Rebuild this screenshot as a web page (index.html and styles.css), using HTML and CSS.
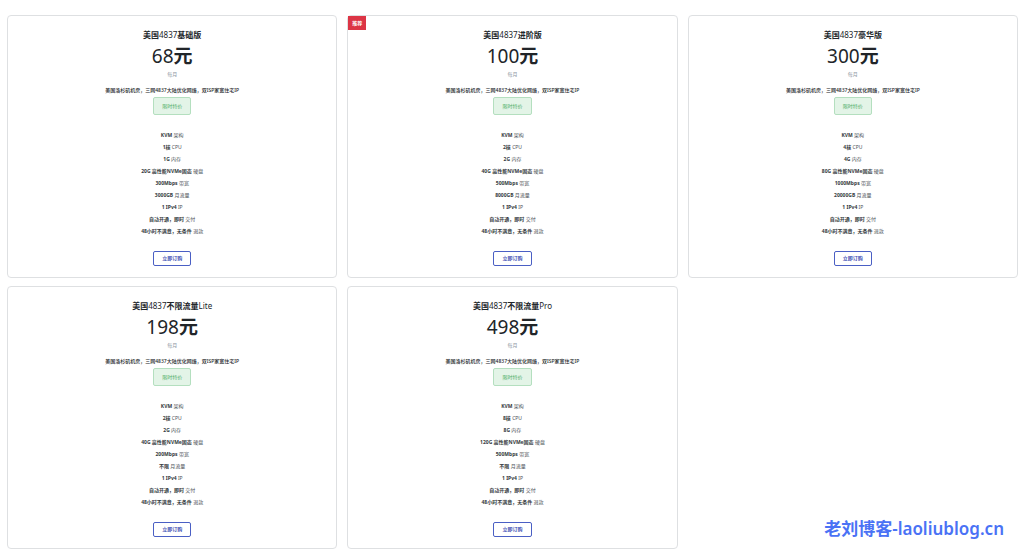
FILE: index.html
```
<!DOCTYPE html>
<html lang="zh-CN">
<head>
    <meta charset="UTF-8">
    <meta name="viewport" content="width=device-width, initial-scale=1.0">
    <title>美国4837</title>
    <link rel="stylesheet" href="styles.css">
</head>
<body>
    <main class="plans">
        <section class="plan">
            <h2 class="plan-name"><b>美国</b>4837<b>基础版</b></h2>
            <p class="price">68<b>元</b></p>
            <p class="period">每月</p>
            <p class="summary">美国洛杉矶机房，三网4837大陆优化网络，双ISP家宽住宅IP</p>
            <span class="offer">限时特价</span>
            <ul class="specs">
                <li><b>KVM</b> 架构</li>
                <li><b>1核</b> CPU</li>
                <li><b>1G</b> 内存</li>
                <li><b>20G 高性能NVMe固态</b> 硬盘</li>
                <li><b>300Mbps</b> 带宽</li>
                <li><b>3000GB</b> 月流量</li>
                <li><b>1 IPv4</b> IP</li>
                <li><b>自动开通，即时</b> 交付</li>
                <li><b>48小时不满意，无条件</b> 退款</li>
            </ul>
            <button class="order-button" type="button">立即订购</button>
        </section>

        <section class="plan">
            <span class="ribbon">推荐</span>
            <h2 class="plan-name"><b>美国</b>4837<b>进阶版</b></h2>
            <p class="price">100<b>元</b></p>
            <p class="period">每月</p>
            <p class="summary">美国洛杉矶机房，三网4837大陆优化网络，双ISP家宽住宅IP</p>
            <span class="offer">限时特价</span>
            <ul class="specs">
                <li><b>KVM</b> 架构</li>
                <li><b>2核</b> CPU</li>
                <li><b>2G</b> 内存</li>
                <li><b>40G 高性能NVMe固态</b> 硬盘</li>
                <li><b>500Mbps</b> 带宽</li>
                <li><b>8000GB</b> 月流量</li>
                <li><b>1 IPv4</b> IP</li>
                <li><b>自动开通，即时</b> 交付</li>
                <li><b>48小时不满意，无条件</b> 退款</li>
            </ul>
            <button class="order-button" type="button">立即订购</button>
        </section>

        <section class="plan">
            <h2 class="plan-name"><b>美国</b>4837<b>豪华版</b></h2>
            <p class="price">300<b>元</b></p>
            <p class="period">每月</p>
            <p class="summary">美国洛杉矶机房，三网4837大陆优化网络，双ISP家宽住宅IP</p>
            <span class="offer">限时特价</span>
            <ul class="specs">
                <li><b>KVM</b> 架构</li>
                <li><b>4核</b> CPU</li>
                <li><b>4G</b> 内存</li>
                <li><b>80G 高性能NVMe固态</b> 硬盘</li>
                <li><b>1000Mbps</b> 带宽</li>
                <li><b>20000GB</b> 月流量</li>
                <li><b>1 IPv4</b> IP</li>
                <li><b>自动开通，即时</b> 交付</li>
                <li><b>48小时不满意，无条件</b> 退款</li>
            </ul>
            <button class="order-button" type="button">立即订购</button>
        </section>

        <section class="plan">
            <h2 class="plan-name"><b>美国</b>4837<b>不限流量</b>Lite</h2>
            <p class="price">198<b>元</b></p>
            <p class="period">每月</p>
            <p class="summary">美国洛杉矶机房，三网4837大陆优化网络，双ISP家宽住宅IP</p>
            <span class="offer">限时特价</span>
            <ul class="specs">
                <li><b>KVM</b> 架构</li>
                <li><b>2核</b> CPU</li>
                <li><b>2G</b> 内存</li>
                <li><b>40G 高性能NVMe固态</b> 硬盘</li>
                <li><b>200Mbps</b> 带宽</li>
                <li><b>不限</b> 月流量</li>
                <li><b>1 IPv4</b> IP</li>
                <li><b>自动开通，即时</b> 交付</li>
                <li><b>48小时不满意，无条件</b> 退款</li>
            </ul>
            <button class="order-button" type="button">立即订购</button>
        </section>

        <section class="plan">
            <h2 class="plan-name"><b>美国</b>4837<b>不限流量</b>Pro</h2>
            <p class="price">498<b>元</b></p>
            <p class="period">每月</p>
            <p class="summary">美国洛杉矶机房，三网4837大陆优化网络，双ISP家宽住宅IP</p>
            <span class="offer">限时特价</span>
            <ul class="specs">
                <li><b>KVM</b> 架构</li>
                <li><b>8核</b> CPU</li>
                <li><b>8G</b> 内存</li>
                <li><b>120G 高性能NVMe固态</b> 硬盘</li>
                <li><b>500Mbps</b> 带宽</li>
                <li><b>不限</b> 月流量</li>
                <li><b>1 IPv4</b> IP</li>
                <li><b>自动开通，即时</b> 交付</li>
                <li><b>48小时不满意，无条件</b> 退款</li>
            </ul>
            <button class="order-button" type="button">立即订购</button>
        </section>
    </main>

    <div class="watermark">老刘博客-laoliublog.cn</div>
</body>
</html>
```
FILE: styles.css
```
* {
    box-sizing: border-box;
}

body {
    margin: 0;
    padding: 15px 6px 10px 7px;
    background: white;
    color: #212529;
    font-family: "Noto Sans", "Noto Sans CJK SC", sans-serif;
}

.plans {
    display: grid;
    grid-template-columns: repeat(3, 1fr);
    gap: 8px 10px;
}

.plan {
    position: relative;
    display: flex;
    flex-direction: column;
    align-items: center;
    padding: 12px 10px 11px;
    border: 1px solid #dee0e2;
    border-radius: 4px;
    text-align: center;
}

.ribbon {
    position: absolute;
    top: 0;
    left: 0;
    padding: 0 4px;
    background: #dc3545;
    color: white;
    font-size: 5px;
    font-weight: bold;
    line-height: 14px;
}

.plan-name {
    margin: 0;
    font-size: 8px;
    font-weight: 400;
    line-height: 14px;
}

.price {
    margin: 0;
    font-size: 19px;
    font-weight: 400;
    line-height: 28px;
}

.period {
    margin: 0;
    color: #8a949e;
    font-size: 5px;
    line-height: 8px;
}

.summary {
    margin: 6px 0 0;
    font-size: 5px;
    font-weight: 500;
    line-height: 12px;
}

.offer {
    margin-top: 1px;
    padding: 0 8px;
    border: 1px solid #b4dfbf;
    border-radius: 2px;
    background: #e3f4e7;
    color: #4fae68;
    font-size: 5px;
    line-height: 16px;
}

.specs {
    margin: 14px 0 0;
    padding: 0;
    list-style: none;
    color: #4a5056;
    font-size: 5px;
    line-height: 12px;
}

.specs b {
    color: #343a40;
}

.order-button {
    margin-top: 14px;
    padding: 0 8px;
    border: 1px solid #4a5fc4;
    border-radius: 2px;
    background: white;
    color: #3f51b5;
    font-family: inherit;
    font-size: 5px;
    font-weight: bold;
    line-height: 13px;
    cursor: pointer;
}

.order-button:hover {
    background: #3f51b5;
    color: white;
}

.watermark {
    position: absolute;
    right: 20px;
    bottom: 18px;
    color: #4a72f5;
    font-size: 17px;
    font-weight: 600;
    line-height: 24px;
}
```
